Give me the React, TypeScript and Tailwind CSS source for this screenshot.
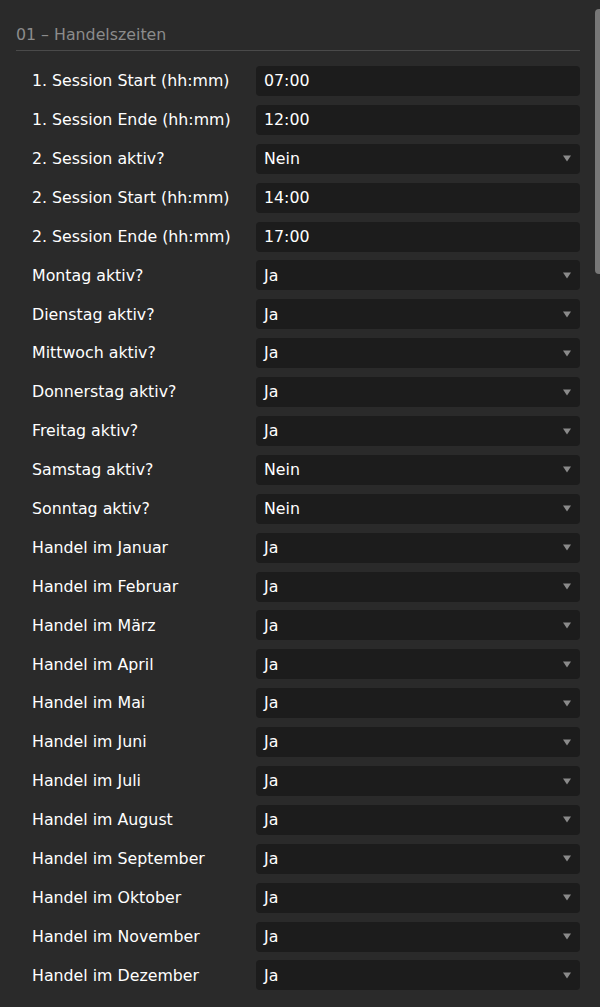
const rows: { label: string; value: string; select: boolean }[] = [
  { label: "1. Session Start (hh:mm)", value: "07:00", select: false },
  { label: "1. Session Ende (hh:mm)", value: "12:00", select: false },
  { label: "2. Session aktiv?", value: "Nein", select: true },
  { label: "2. Session Start (hh:mm)", value: "14:00", select: false },
  { label: "2. Session Ende (hh:mm)", value: "17:00", select: false },
  { label: "Montag aktiv?", value: "Ja", select: true },
  { label: "Dienstag aktiv?", value: "Ja", select: true },
  { label: "Mittwoch aktiv?", value: "Ja", select: true },
  { label: "Donnerstag aktiv?", value: "Ja", select: true },
  { label: "Freitag aktiv?", value: "Ja", select: true },
  { label: "Samstag aktiv?", value: "Nein", select: true },
  { label: "Sonntag aktiv?", value: "Nein", select: true },
  { label: "Handel im Januar", value: "Ja", select: true },
  { label: "Handel im Februar", value: "Ja", select: true },
  { label: "Handel im März", value: "Ja", select: true },
  { label: "Handel im April", value: "Ja", select: true },
  { label: "Handel im Mai", value: "Ja", select: true },
  { label: "Handel im Juni", value: "Ja", select: true },
  { label: "Handel im Juli", value: "Ja", select: true },
  { label: "Handel im August", value: "Ja", select: true },
  { label: "Handel im September", value: "Ja", select: true },
  { label: "Handel im Oktober", value: "Ja", select: true },
  { label: "Handel im November", value: "Ja", select: true },
  { label: "Handel im Dezember", value: "Ja", select: true },
];

function Caret() {
  return (
    <svg width="8" height="7" viewBox="0 0 8 7" className="shrink-0">
      <path d="M0 0.5 L8 0.5 L4 6.5 Z" fill="#8a8a8a" />
    </svg>
  );
}

export default function App() {
  return (
    <div
      className="relative h-[1007px] w-[600px] overflow-hidden bg-[#2a2a2a] pl-[16px] pr-[20px]"
      style={{ fontFamily: '"DejaVu Sans", "Liberation Sans", sans-serif' }}
    >
      {/* Abschnittstitel */}
      <div className="border-b border-[#4a4a4a] pb-[6px] pt-[26px] text-[15.8px] leading-[18px] text-[#8c8c8c]">
        01 – Handelszeiten
      </div>

      {/* Einstellungen */}
      <div className="mt-[15px] flex flex-col gap-[8.9px] pl-[16px]">
        {rows.map((r) => (
          <div key={r.label} className="flex h-[30px] items-center">
            <div className="w-[224px] shrink-0 text-[15.8px] text-white">
              {r.label}
            </div>
            <div className="flex h-[30px] flex-1 items-center justify-between rounded-[4px] bg-[#1c1c1c] pl-[8px] pr-[9px] text-[15.8px] text-white">
              <span>{r.value}</span>
              {r.select && <Caret />}
            </div>
          </div>
        ))}
      </div>

      {/* Scrollbar */}
      <div className="absolute right-[-3px] top-[9px] h-[265px] w-[8px] rounded-full bg-[#777777]" />
    </div>
  );
}
